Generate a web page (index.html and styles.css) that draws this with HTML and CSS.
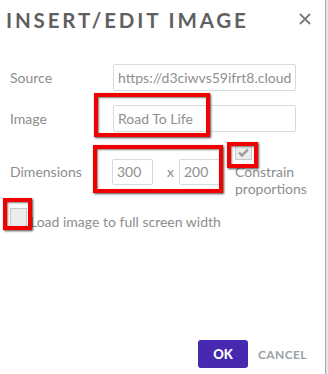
FILE: index.html
```html
<!DOCTYPE html>
<html>
<head>
<meta charset="utf-8">
<link rel="stylesheet" href="styles.css">
</head>
<body>
<div class="page">
  <div class="dialog">
    <div class="header">
      <h1 class="title">INSERT/EDIT IMAGE</h1>
      <svg class="close" width="12" height="12" viewBox="0 0 12 12"><path d="M1 1 L11 11 M11 1 L1 11" stroke="#7a7a7a" stroke-width="1.8" fill="none"/></svg>
    </div>
    <div class="form">
      <label class="label">Source</label>
      <div class="input wide"><span class="val">https://d3ciwvs59ifrt8.cloud</span></div>
      <label class="label">Image</label>
      <div class="input wide"><span class="val">Road To Life</span></div>
      <label class="label">Dimensions</label>
      <div class="dims">
        <div class="input small"><span class="val">300</span></div>
        <span class="times">x</span>
        <div class="input small"><span class="val">200</span></div>
        <div class="constrain">
          <span class="check checked"><svg width="11" height="9" viewBox="0 0 11 9"><path d="M1 4.5 L4 7.5 L10 1.5" fill="none" stroke="#9a9a9a" stroke-width="2.4"/></svg></span>
          <span class="constrain-text">Constrain<br>proportions</span>
        </div>
      </div>
    </div>
    <div class="load">
      <span class="check big"></span>
      <span class="load-text">Load image to full screen width</span>
    </div>
    <div class="footer">
      <button class="ok">OK</button>
      <button class="cancel">CANCEL</button>
    </div>
  </div>
  <div class="side"></div>
  <div class="mark m1"></div>
  <div class="mark m2"></div>
  <div class="mark m3"></div>
  <div class="mark m4"></div>
</div>
</body>
</html>
```
FILE: styles.css
```css
* { box-sizing: border-box; }
html, body { margin: 0; padding: 0; background: #fff; }
body { font-family: Lato, "Open Sans", sans-serif; }
.page { position: relative; display: flex; width: 328px; height: 374px; overflow: hidden; }
.dialog { width: 326px; height: 374px; border-right: 1px solid #a9a9a9; display: flex; flex-direction: column; background: #fff; }
.side { width: 2px; background: #e6e6e6; }
.header { display: flex; justify-content: space-between; align-items: flex-start; padding: 8px 14px 0 6px; }
.title { margin: 0; font-size: 20.5px; line-height: 24px; font-weight: 700; letter-spacing: 2.85px; color: #606060; }
.close { margin-top: 5px; }
.form { display: grid; grid-template-columns: 103px auto; row-gap: 14px; padding: 32px 0 0 10px; align-items: center; }
.label { font-size: 14px; color: #8d8d8d; }
.input { height: 27px; border: 1px solid #d6dbe0; border-radius: 2px; display: flex; align-items: center; padding: 0 3px; overflow: hidden; white-space: nowrap; flex-shrink: 0; }
.wide { width: 183px; }
.val { font-size: 14px; color: #8f8f8f; padding-left: 1px; }
.small { width: 41px; height: 26px; }
.dims { display: flex; align-items: center; margin-left: -1px; }
.times { font-size: 14px; color: #8f8f8f; margin: 0 5px 0 14px; }
.constrain { display: flex; flex-direction: column; margin-left: 15px; margin-top: -2px; }
.check { display: flex; align-items: center; justify-content: center; width: 17px; height: 16px; border: 1px solid #c8c8c8; background: #ececec; flex-shrink: 0; }
.constrain-text { font-size: 14px; line-height: 17px; color: #8d8d8d; margin-top: 3px; white-space: nowrap; }
.load { display: flex; align-items: flex-end; padding: 11px 0 0 10px; }
.big { width: 17px; height: 19px; }
.load-text { font-size: 14px; line-height: 17px; color: #8d8d8d; margin-left: 3px; margin-bottom: -3px; }
.footer { margin-top: auto; display: flex; justify-content: flex-end; align-items: center; padding: 0 18px 6px 0; }
.ok { width: 50px; height: 28px; border: 0; border-radius: 3px; background: #4629ae; color: #fff; font-family: Lato, sans-serif; font-weight: 900; font-size: 13px; padding: 0; }
.cancel { border: 0; background: none; color: #9aa0a8; font-family: Lato, sans-serif; font-weight: 700; font-size: 12px; letter-spacing: 0.4px; padding: 0; margin-left: 10px; }
.mark { position: absolute; border: 4px solid #f20000; box-shadow: 1px 1px 2px rgba(0,0,0,.7), inset 1px 1px 2px rgba(0,0,0,.5); }
.m1 { left: 94px; top: 93px; width: 116px; height: 44px; }
.m2 { left: 93px; top: 145px; width: 130px; height: 48px; }
.m3 { left: 227px; top: 142px; width: 31px; height: 26px; }
.m4 { left: 3px; top: 198px; width: 29px; height: 32px; }
```
